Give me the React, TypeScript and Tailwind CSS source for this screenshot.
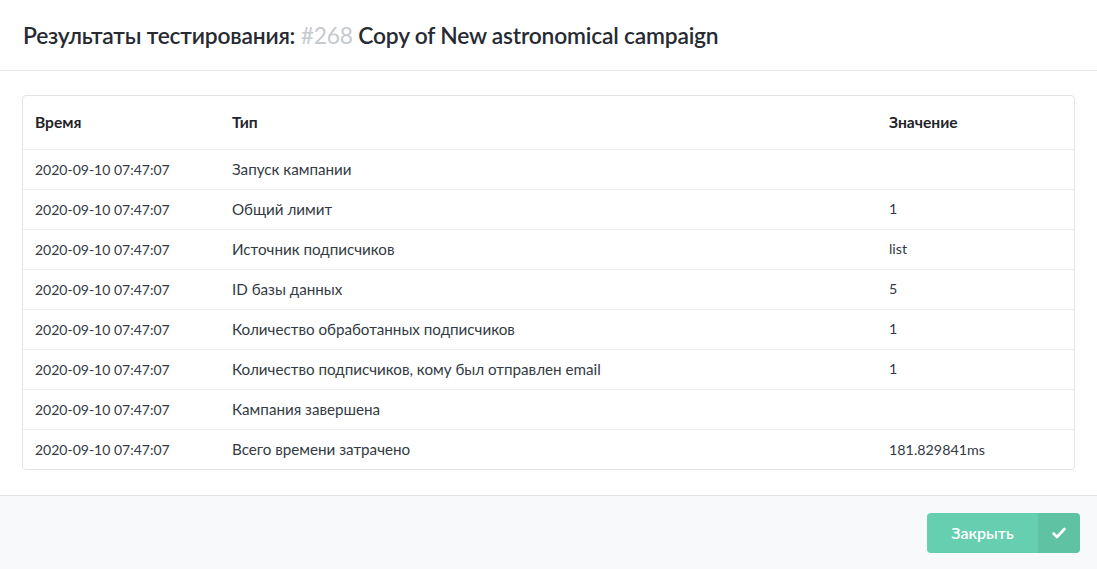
const rows: [string, string][] = [
  ['Запуск кампании', ''],
  ['Общий лимит', '1'],
  ['Источник подписчиков', 'list'],
  ['ID базы данных', '5'],
  ['Количество обработанных подписчиков', '1'],
  ['Количество подписчиков, кому был отправлен email', '1'],
  ['Кампания завершена', ''],
  ['Всего времени затрачено', '181.829841ms'],
]

export default function App() {
  return (
    <div className="w-[1097px] h-[569px] bg-white flex flex-col text-[#333a44]" style={{ fontFamily: 'Lato, "Noto Sans", sans-serif' }}>
      <div className="h-[71px] shrink-0 flex items-center px-[23px] border-b border-[#e4e6ea]">
        <h2 className="text-[22.8px] font-semibold text-[#262b33] tracking-[-0.2px]">
          Результаты тестирования: <span className="font-normal text-[#c6c9ce]">#268</span> Copy of New astronomical campaign
        </h2>
      </div>
      <div className="flex-1 px-[22px] pt-[24px] pb-[24px]">
        <div className="border border-[#e2e4e8] rounded-[4px] overflow-hidden">
          <table className="w-full text-[15.2px] border-collapse">
            <thead>
              <tr className="h-[53px] text-left text-[15.6px]">
                <th className="w-[197px] pl-[12px] font-bold text-[#1f242b]">Время</th>
                <th className="pl-[12px] font-bold text-[#1f242b]">Тип</th>
                <th className="w-[197px] pl-[12px] font-bold text-[#1f242b]">Значение</th>
              </tr>
            </thead>
            <tbody>
              {rows.map(([type, value], i) => (
                <tr key={i} className="h-[40px] border-t border-[#eceef1]">
                  <td className="pl-[12px] text-[14px]">2020-09-10 07:47:07</td>
                  <td className="pl-[12px]">{type}</td>
                  <td className="pl-[12px] text-[14.3px]">{value}</td>
                </tr>
              ))}
            </tbody>
          </table>
        </div>
      </div>
      <div className="h-[74px] shrink-0 bg-[#f8f9fb] border-t border-[#e2e4e8] flex justify-end items-start pt-[17px] pr-[17px]">
        <button className="flex h-[40px] rounded-[4px] overflow-hidden text-white text-[16px] font-semibold">
          <span className="w-[111px] bg-[#66cfb0] flex items-center justify-center">Закрыть</span>
          <span className="w-[42px] bg-[#5ec2a3] flex items-center justify-center">
            <svg width="16" height="16" viewBox="0 0 16 16" fill="none" stroke="white" strokeWidth="2.6" strokeLinecap="round" strokeLinejoin="round">
              <path d="M2.5 8.5l3.5 3.5 7.5-8" />
            </svg>
          </span>
        </button>
      </div>
    </div>
  )
}
